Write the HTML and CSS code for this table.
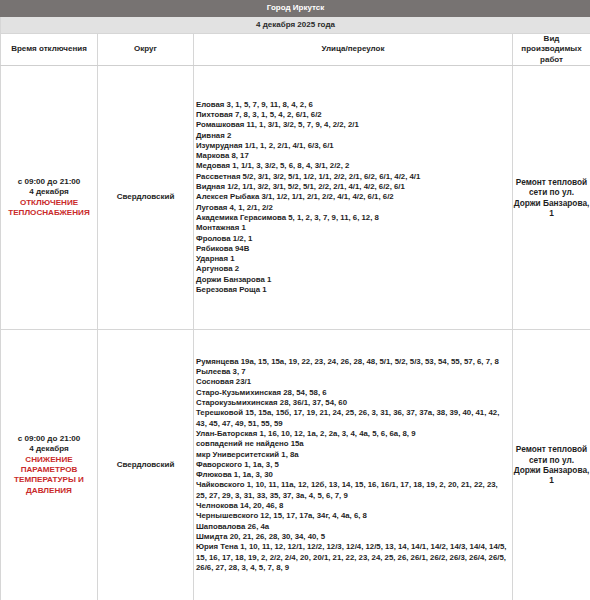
FILE: index.html
```html
<!DOCTYPE html>
<html lang="ru">
<head>
<meta charset="utf-8">
<title>Город Иркутск</title>
<link rel="stylesheet" href="styles.css">
</head>
<body>
<table class="sched">
  <colgroup>
    <col class="c-time">
    <col class="c-okrug">
    <col class="c-street">
    <col class="c-work">
  </colgroup>
  <tr class="r-city"><td colspan="4">Город Иркутск</td></tr>
  <tr class="r-date"><td colspan="4">4 декабря 2025 года</td></tr>
  <tr class="r-head">
    <td>Время отключения</td>
    <td>Округ</td>
    <td>Улица/переулок</td>
    <td>Вид<br>производимых<br>работ</td>
  </tr>
  <tr class="r-1">
    <td class="time">с 09:00 до 21:00<br>4 декабря<br><span class="alert">ОТКЛЮЧЕНИЕ<br>ТЕПЛОСНАБЖЕНИЯ</span></td>
    <td class="okrug">Свердловский</td>
    <td class="streets">
      <div>Еловая 3, 1, 5, 7, 9, 11, 8, 4, 2, 6</div>
      <div>Пихтовая 7, 8, 3, 1, 5, 4, 2, 6/1, 6/2</div>
      <div>Ромашковая 11, 1, 3/1, 3/2, 5, 7, 9, 4, 2/2, 2/1</div>
      <div>Дивная 2</div>
      <div>Изумрудная 1/1, 1, 2, 2/1, 4/1, 6/3, 6/1</div>
      <div>Маркова 8, 17</div>
      <div>Медовая 1, 1/1, 3, 3/2, 5, 6, 8, 4, 3/1, 2/2, 2</div>
      <div>Рассветная 5/2, 3/1, 3/2, 5/1, 1/2, 1/1, 2/2, 2/1, 6/2, 6/1, 4/2, 4/1</div>
      <div>Видная 1/2, 1/1, 3/2, 3/1, 5/2, 5/1, 2/2, 2/1, 4/1, 4/2, 6/2, 6/1</div>
      <div>Алексея Рыбака 3/1, 1/2, 1/1, 2/1, 2/2, 4/1, 4/2, 6/1, 6/2</div>
      <div>Луговая 4, 1, 2/1, 2/2</div>
      <div>Академика Герасимова 5, 1, 2, 3, 7, 9, 11, 6, 12, 8</div>
      <div>Монтажная 1</div>
      <div>Фролова 1/2, 1</div>
      <div>Рябикова 94В</div>
      <div>Ударная 1</div>
      <div>Аргунова 2</div>
      <div>Доржи Банзарова 1</div>
      <div>Березовая Роща 1</div>
    </td>
    <td class="work">Ремонт тепловой<br>сети по ул.<br>Доржи Банзарова,<br>1</td>
  </tr>
  <tr class="r-2">
    <td class="time">с 09:00 до 21:00<br>4 декабря<br><span class="alert">СНИЖЕНИЕ<br>ПАРАМЕТРОВ<br>ТЕМПЕРАТУРЫ И<br>ДАВЛЕНИЯ</span></td>
    <td class="okrug">Свердловский</td>
    <td class="streets">
      <div>Румянцева 19а, 15, 15а, 19, 22, 23, 24, 26, 28, 48, 5/1, 5/2, 5/3, 53, 54, 55, 57, 6, 7, 8</div>
      <div>Рылеева 3, 7</div>
      <div>Сосновая 23/1</div>
      <div>Старо-Кузьмихинская 28, 54, 58, 6</div>
      <div>Старокузьмихинская 28, 36/1, 37, 54, 60</div>
      <div>Терешковой 15, 15а, 15б, 17, 19, 21, 24, 25, 26, 3, 31, 36, 37, 37а, 38, 39, 40, 41, 42,<br>43, 45, 47, 49, 51, 55, 59</div>
      <div>Улан-Баторская 1, 16, 10, 12, 1а, 2, 2а, 3, 4, 4а, 5, 6, 6а, 8, 9</div>
      <div>совпадений не найдено 15а</div>
      <div>мкр Университетский 1, 8а</div>
      <div>Фаворского 1, 1а, 3, 5</div>
      <div>Флюкова 1, 1а, 3, 30</div>
      <div>Чайковского 1, 10, 11, 11а, 12, 12б, 13, 14, 15, 16, 16/1, 17, 18, 19, 2, 20, 21, 22, 23,<br>25, 27, 29, 3, 31, 33, 35, 37, 3а, 4, 5, 6, 7, 9</div>
      <div>Челнокова 14, 20, 46, 8</div>
      <div>Чернышевского 12, 15, 17, 17а, 34г, 4, 4а, 6, 8</div>
      <div>Шаповалова 26, 4а</div>
      <div>Шмидта 20, 21, 26, 28, 30, 34, 40, 5</div>
      <div>Юрия Тена 1, 10, 11, 12, 12/1, 12/2, 12/3, 12/4, 12/5, 13, 14, 14/1, 14/2, 14/3, 14/4, 14/5,<br>15, 16, 17, 18, 19, 2, 2/2, 2/4, 20, 20/1, 21, 22, 23, 24, 25, 26, 26/1, 26/2, 26/3, 26/4, 26/5,<br>26/6, 27, 28, 3, 4, 5, 7, 8, 9</div>
    </td>
    <td class="work">Ремонт тепловой<br>сети по ул.<br>Доржи Банзарова,<br>1</td>
  </tr>
</table>
</body>
</html>
```
FILE: styles.css
```css
html, body {
  margin: 0;
  padding: 0;
  background: #ffffff;
}

.sched {
  width: 590px;
  border-collapse: collapse;
  table-layout: fixed;
  font-family: "Liberation Sans", Arial, sans-serif;
  font-weight: bold;
  font-size: 8px;
  line-height: 10.3px;
  color: #1e1e1e;
}

.c-time { width: 97px; }
.c-okrug { width: 96px; }
.c-street { width: 319px; }
.c-work { width: 78px; }

.sched td {
  border: 1px solid #d6d6d6;
  padding: 0;
  text-align: center;
  vertical-align: middle;
}

.r-city td {
  height: 15px;
  background: #777372;
  color: #ffffff;
  border-color: #777372;
}

.r-date td {
  height: 16px;
  background: #e2e2e2;
  color: #2a2a2a;
  border-color: #d6d6d6;
}

.r-head td {
  height: 31px;
  border-bottom: 1px solid #cfcfcf;
}

.r-1 td {
  height: 263px;
}

.r-2 td {
  height: 270px;
}

.sched td.time {
  font-size: 8.1px;
}

.sched td.streets {
  text-align: left;
  padding-left: 2px;
  white-space: nowrap;
  font-size: 7.8px;
}

.sched td.work {
  white-space: nowrap;
  font-size: 8.3px;
}

.alert {
  color: #c92a2a;
}
```
